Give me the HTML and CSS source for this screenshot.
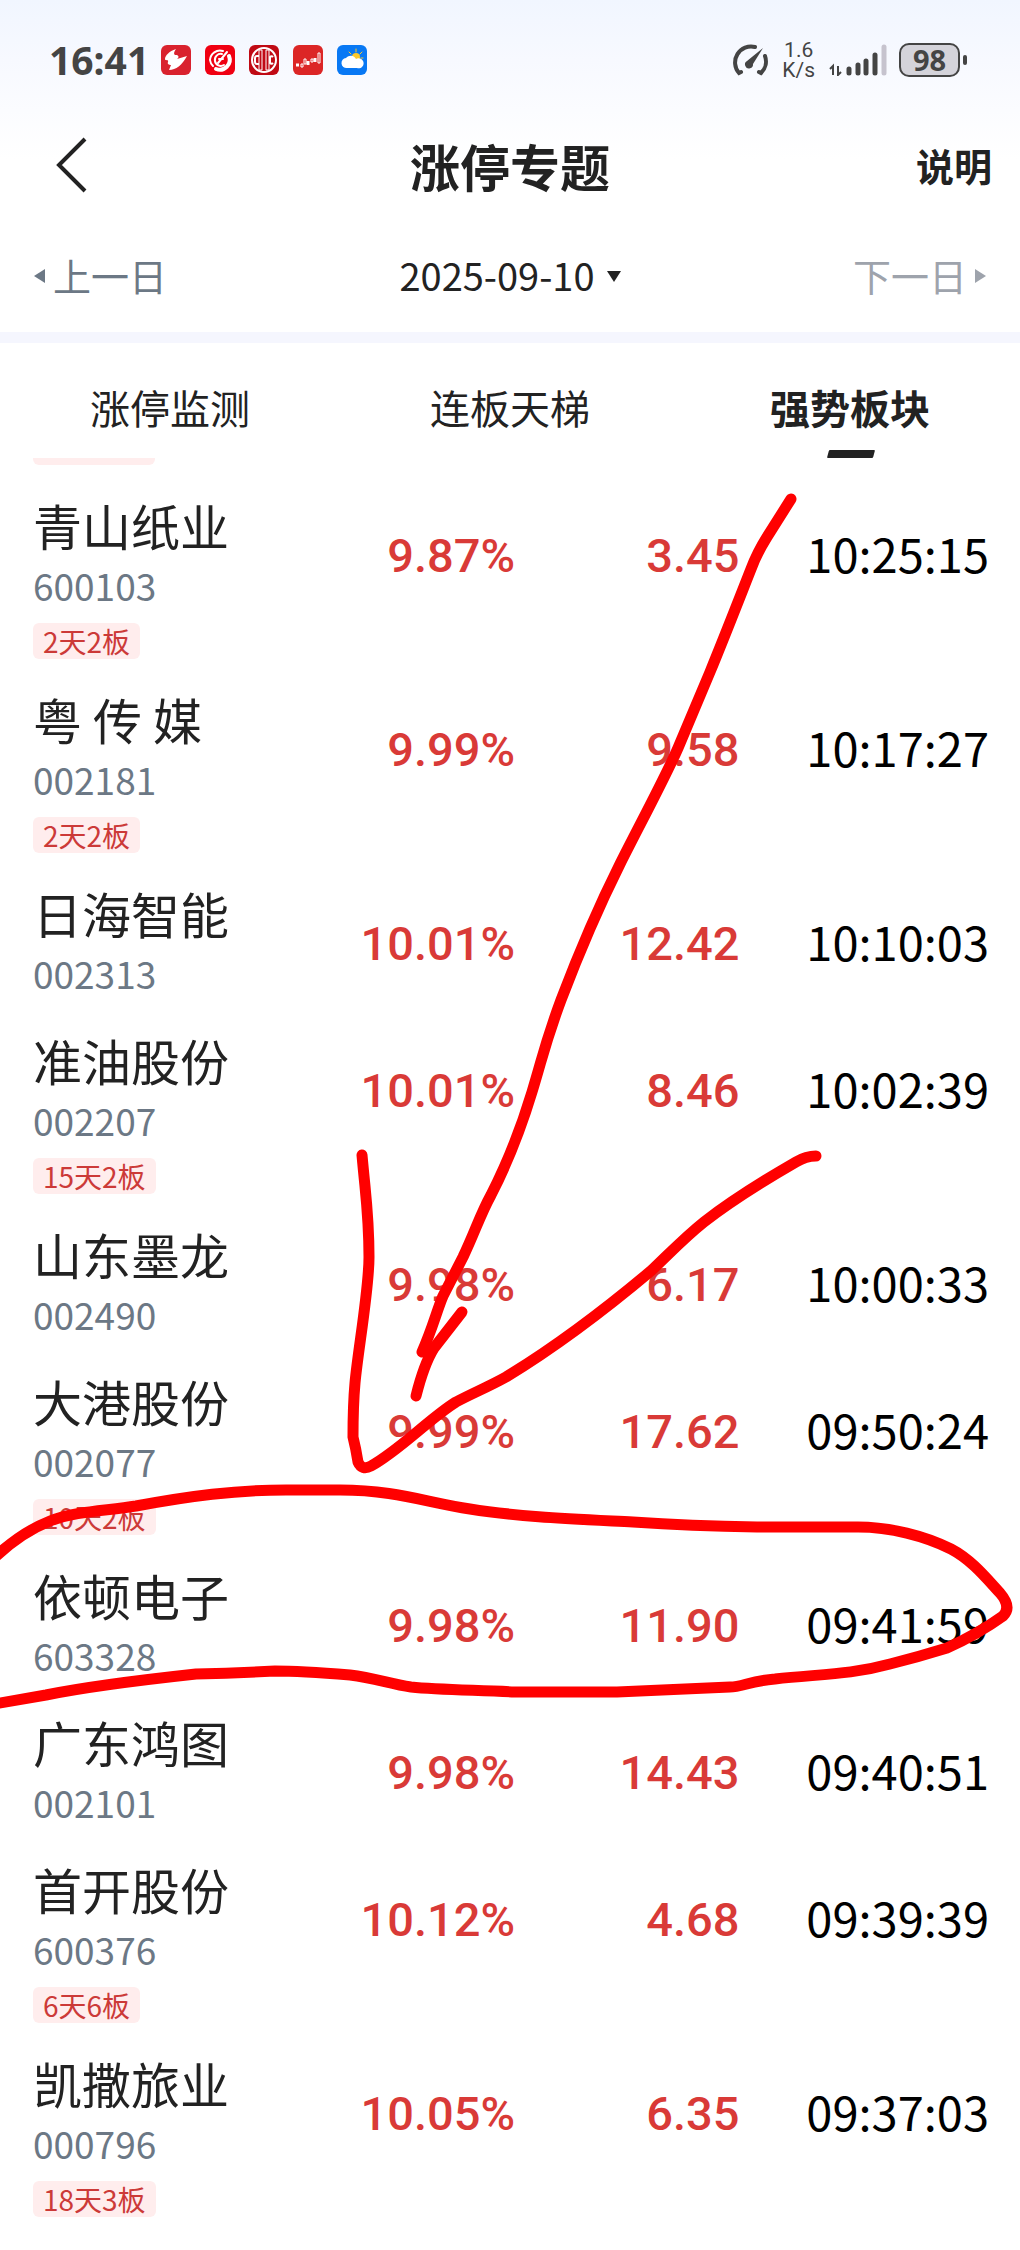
FILE: index.html
```html
<!DOCTYPE html>
<html lang="zh-CN">
<head>
    <meta charset="UTF-8">
    <meta name="viewport" content="width=device-width, initial-scale=1">
    <title>涨停专题</title>
    <link rel="stylesheet" href="styles.css">
</head>
<body>

<header class="top">
    <div class="status-bar">
        <span class="clock">16:41</span>
        <div class="apps">
            <svg class="app" viewBox="0 0 30 30">
                <rect width="30" height="30" rx="6" fill="#d9222e"/>
                <path d="M15 4 C8 6 4 11 4 14 C4 16 8 14 7 17 C6 19 8 20 10 20 L8 25 C15 25 21 20 26 11 L16 14 C19 12 17 10 15 10 C13 10 12 8 15 4Z" fill="#fff"/>
            </svg>
            <svg class="app" viewBox="0 0 30 30">
                <rect width="30" height="30" rx="6" fill="#f00012"/>
                <g fill="none" stroke="#fff" stroke-linecap="round">
                    <path d="M18 6 A10 10 0 0 0 5 15 A10 10 0 0 0 8 21" stroke-width="2"/>
                    <path d="M17 9 A6 6 0 1 0 19 20" stroke-width="2"/>
                    <path d="M24 11 A10 10 0 0 1 11 24" stroke-width="4"/>
                    <path d="M13 18 L22 7 M14 14 h4" stroke-width="2"/>
                </g>
            </svg>
            <svg class="app" viewBox="0 0 30 30">
                <rect width="30" height="30" rx="6" fill="#c00a14"/>
                <g fill="none" stroke="#fff">
                    <circle cx="15" cy="15" r="12" stroke-width="2"/>
                    <path d="M10 5 h3 v20 h-3 M20 5 h-3 v20 h3 M10 5 v20 M20 5 v20" stroke-width="1"/>
                    <path d="M10 11 h-2 a2 2 0 0 0 -2 2 v4 a2 2 0 0 0 2 2 h2 M24 12 a2 2 0 0 0 -3 0 v6 a2 2 0 0 0 3 0" stroke-width="2"/>
                </g>
            </svg>
            <svg class="app" viewBox="0 0 30 30">
                <rect width="30" height="30" rx="6" fill="#dc2626"/>
                <path d="M3 20 h3 M15 16 v4 M22 13 v4" stroke="#fff" stroke-width="3"/>
                <path d="M8 19 h2 v3 h-2z M11 14 h2 v5 h-2z M18 14 h2 v3 h-2z M25 8 h2 v10 h-2z" fill="none" stroke="#fff"/>
            </svg>
            <svg class="app" viewBox="0 0 30 30">
                <rect width="30" height="30" rx="6" fill="#0878f4"/>
                <path d="M19 4 v3 M12 7 l2 2 M25 7 l-2 2 M26 13 h-2 M24 18 l-1 -1" stroke="#ffc928" stroke-width="1" stroke-linecap="round"/>
                <circle cx="19" cy="12" r="4" fill="#ffc928"/>
                <path d="M10 23 a5 5 0 0 1 -1 -10 a6 6 0 0 1 10 1 a5 5 0 1 1 1 9z" fill="#fff"/>
            </svg>
        </div>
        <svg class="gauge" viewBox="0 0 36 32">
            <g fill="none" stroke="#444" stroke-width="4" stroke-linecap="round">
                <path d="M9 28 L7 29 A16 16 0 0 1 23 3"/>
                <path d="M27 28 L29 29 A16 16 0 0 0 33 12"/>
            </g>
            <path d="M31 4 L21 20 A4 4 0 1 1 15 17Z" fill="#444"/>
        </svg>
        <div class="speed"><span>1.6</span><span>K/s</span></div>
        <svg class="signal" viewBox="0 0 58 32">
            <path d="M1 25 L4 22 V31 M9 22 V31 L12 28" fill="none" stroke="#444" stroke-width="2"/>
            <g stroke="#444" stroke-width="5" stroke-linecap="round">
                <path d="M20 25 v4 M29 21 v8 M37 17 v12 M46 11 v18"/>
                <path d="M55 3 v26" stroke="#c6c3ce"/>
            </g>
        </svg>
        <div class="battery">98</div>
    </div>

    <div class="title-bar">
        <button class="back" aria-label="返回">
            <svg viewBox="0 0 32 56"><path d="M29 2 L3 28 L29 54" fill="none" stroke="#222" stroke-width="4"/></svg>
        </button>
        <h1>涨停专题</h1>
        <button class="explain">说明</button>
    </div>

    <nav class="date-bar">
        <button class="prev"><svg class="side" viewBox="0 0 11 14"><path d="M11 0 V14 L0 7Z" fill="currentColor"/></svg>上一日</button>
        <button class="date">2025-09-10<svg class="down" viewBox="0 0 14 11"><path d="M0 0 H14 L7 11Z" fill="currentColor"/></svg></button>
        <button class="next" disabled>下一日<svg class="side" viewBox="0 0 11 14"><path d="M0 0 V14 L11 7Z" fill="currentColor"/></svg></button>
    </nav>
</header>

<nav class="tabs">
    <button>涨停监测</button>
    <button>连板天梯</button>
    <button class="active">强势板块</button>
</nav>

<main>
    <!-- tail of the row scrolled under the tabs -->
    <div class="cut-tag"></div>

    <table class="stocks">
        <colgroup>
            <col class="col-name">
            <col class="col-change">
            <col class="col-price">
            <col class="col-time">
        </colgroup>
        <tbody>
            <tr>
                <td><div class="name">青山纸业</div><div class="code">600103</div><span class="tag">2天2板</span></td>
                <td class="up">9.87%</td>
                <td class="up">3.45</td>
                <td class="time">10:25:15</td>
            </tr>
            <tr>
                <td><div class="name">粤 传 媒</div><div class="code">002181</div><span class="tag">2天2板</span></td>
                <td class="up">9.99%</td>
                <td class="up">9.58</td>
                <td class="time">10:17:27</td>
            </tr>
            <tr>
                <td><div class="name">日海智能</div><div class="code">002313</div></td>
                <td class="up">10.01%</td>
                <td class="up">12.42</td>
                <td class="time">10:10:03</td>
            </tr>
            <tr>
                <td><div class="name">准油股份</div><div class="code">002207</div><span class="tag">15天2板</span></td>
                <td class="up">10.01%</td>
                <td class="up">8.46</td>
                <td class="time">10:02:39</td>
            </tr>
            <tr>
                <td><div class="name">山东墨龙</div><div class="code">002490</div></td>
                <td class="up">9.98%</td>
                <td class="up">6.17</td>
                <td class="time">10:00:33</td>
            </tr>
            <tr>
                <td><div class="name">大港股份</div><div class="code">002077</div><span class="tag">10天2板</span></td>
                <td class="up">9.99%</td>
                <td class="up">17.62</td>
                <td class="time">09:50:24</td>
            </tr>
            <tr>
                <td><div class="name">依顿电子</div><div class="code">603328</div></td>
                <td class="up">9.98%</td>
                <td class="up">11.90</td>
                <td class="time">09:41:59</td>
            </tr>
            <tr>
                <td><div class="name">广东鸿图</div><div class="code">002101</div></td>
                <td class="up">9.98%</td>
                <td class="up">14.43</td>
                <td class="time">09:40:51</td>
            </tr>
            <tr>
                <td><div class="name">首开股份</div><div class="code">600376</div><span class="tag">6天6板</span></td>
                <td class="up">10.12%</td>
                <td class="up">4.68</td>
                <td class="time">09:39:39</td>
            </tr>
            <tr>
                <td><div class="name">凯撒旅业</div><div class="code">000796</div><span class="tag">18天3板</span></td>
                <td class="up">10.05%</td>
                <td class="up">6.35</td>
                <td class="time">09:37:03</td>
            </tr>
        </tbody>
    </table>
</main>

<!-- red pen marks over the list -->
<svg class="marks" viewBox="0 0 1020 2250" aria-hidden="true">
    <path d="M791 499 L767 537 Q757 553 751 569 C738 602 724 638 710 672 L678 748 C664 780 640 824 620 864 C596 912 580 950 561 1000 C545 1043 543 1056 532 1092 C522 1125 509 1160 491 1195 C480 1215 475 1232 463 1257 L443 1296 C437 1310 432 1330 422 1352"/>
    <path d="M462 1312 L434 1348 Q424 1364 416 1396"/>
    <path d="M362 1155 C366 1200 369 1215 369 1257 C369 1290 358 1350 355 1383 C353 1405 353 1420 353 1437 Q356 1449 358 1462 Q362 1471 371 1466 C400 1450 430 1418 456 1402 C475 1392 488 1387 506 1377 C562 1343 608 1307 652 1270 C670 1253 684 1238 704 1222 C735 1198 770 1177 796 1162 Q806 1156 816 1156"/>
    <path d="M-6 1558 Q22 1532 50 1521 C76 1511 105 1511 136 1506 C190 1496 235 1490 286 1490 H340 C395 1490 425 1502 470 1509 C520 1517 575 1519 633 1522 Q690 1526 757 1527 H858 C890 1527 925 1536 951 1549 C972 1560 987 1579 1000 1593 Q1012 1607 1003 1616 Q978 1634 947 1648 Q918 1657 890 1664 C850 1675 820 1674 775 1679 C750 1681 742 1687 730 1687 C700 1688 660 1690 617 1692 H515 C480 1690 440 1690 411 1687 C390 1684 375 1678 350 1675 C325 1673 300 1671 275 1671 Q235 1673 196 1674 C150 1679 90 1686 46 1695 L-6 1704"/>
</svg>

</body>
</html>
```
FILE: styles.css
```css
* {
    box-sizing: border-box;
}
body {
    margin: 0;
    position: relative;
    overflow-x: hidden;
    background: #fff;
    color: #222;
    font-family: "Noto Sans CJK SC", sans-serif;
}
button {
    padding: 0;
    border: none;
    background: none;
    color: inherit;
    font: inherit;
    cursor: pointer;
}
svg {
    display: block;
}

.top {
    background: linear-gradient(#f1f6ff, #f7f9ff 60px, #fff 160px);
    border-bottom: #f5f6fe solid 11px;
}

.status-bar {
    display: flex;
    align-items: center;
    height: 120px;
    padding: 0 60px 0 49px;
    color: #444;
}
.clock {
    font: bold 39px/40px "Noto Sans", sans-serif;
}
.apps {
    display: flex;
    gap: 14px;
    margin-left: 12px;
    margin-right: auto;
}
.app {
    width: 30px;
    height: 30px;
}
.gauge {
    width: 36px;
    height: 32px;
}
.speed {
    display: flex;
    flex-direction: column;
    margin: 0 14px;
    font: 21px/20px Roboto, sans-serif;
    text-align: center;
}
.signal {
    width: 58px;
    height: 32px;
}
.battery {
    position: relative;
    width: 61px;
    height: 34px;
    margin-left: 12px;
    border: #444 solid 2px;
    border-radius: 10px;
    background: #d4d3da;
    font: bold 29px/30px "Noto Sans", sans-serif;
    text-align: center;
}
.battery::after {
    content: "";
    position: absolute;
    top: 10px;
    right: -9px;
    width: 4px;
    height: 10px;
    border-radius: 2px;
    background: #444;
}

.title-bar {
    display: grid;
    grid-template-columns: 1fr auto 1fr;
    align-items: center;
    height: 92px;
    padding: 0 28px 2px;
}
.title-bar h1 {
    margin: 0;
    font-size: 50px;
    line-height: 60px;
}
.back {
    justify-self: start;
    padding-left: 28px;
}
.back svg {
    width: 32px;
    height: 56px;
}
.explain {
    justify-self: end;
    font-weight: bold;
    font-size: 38px;
    line-height: 60px;
}

.date-bar {
    display: grid;
    grid-template-columns: 1fr auto 1fr;
    height: 120px;
    padding: 4px 34px 0;
    font-size: 38px;
}
.date-bar button {
    display: flex;
    align-items: center;
}
.date-bar svg {
    margin-top: 4px;
}
.date-bar .prev {
    gap: 8px;
    color: #6c7885;
}
.date-bar .date {
    gap: 12px;
}
.date-bar .next {
    gap: 8px;
    justify-self: end;
    color: #9ea3ac;
}
.side {
    width: 11px;
    height: 14px;
}
.down {
    width: 14px;
    height: 11px;
}

.tabs {
    display: grid;
    grid-template-columns: repeat(3, 1fr);
}
.tabs button {
    position: relative;
    padding: 34px 0 21px;
    font-size: 40px;
    line-height: 60px;
}
.tabs .active {
    font-weight: bold;
}
.tabs .active::after {
    content: "";
    position: absolute;
    left: 50%;
    bottom: 0;
    width: 46px;
    height: 8px;
    margin-left: -22px;
    border-radius: 1px;
    background: #222;
    transform: skewX(-15deg);
}

.cut-tag {
    width: 122px;
    height: 7px;
    margin: 0 33px 30px;
    border-radius: 0 0 6px 6px;
    background: #ffeded;
}

.stocks {
    width: 100%;
    table-layout: fixed;
    border-collapse: collapse;
}
.stocks tr {
    height: 147px;
}
.stocks td {
    padding: 0;
    vertical-align: top;
    white-space: nowrap;
}
.stocks td:first-child {
    padding: 0 0 30px 33px;
}
.col-name {
    width: 25%;
}
.col-change {
    width: 25.5%;
}
.col-price {
    width: 22%;
}
.name {
    font-size: 49px;
    line-height: 60px;
}
.code {
    margin-top: 8px;
    color: #6c7885;
    font-size: 37px;
    line-height: 44px;
}
.tag {
    display: block;
    width: max-content;
    margin-top: 16px;
    padding: 0 10px;
    border-radius: 6px;
    background: #ffeded;
    color: #cc3a38;
    font-size: 28px;
    line-height: 36px;
}
.stocks .up {
    padding-top: 31px;
    color: #d93a37;
    font: 500 47px/60px Roboto, sans-serif;
    text-align: right;
}
.stocks .time {
    padding: 28px 31px 0 0;
    color: #000;
    font-size: 47px;
    line-height: 60px;
    text-align: right;
}

.marks {
    position: absolute;
    top: 0;
    left: 0;
    width: 100%;
    pointer-events: none;
    fill: none;
    stroke: #f00;
    stroke-width: 11px;
    stroke-linecap: round;
    stroke-linejoin: round;
}
```
